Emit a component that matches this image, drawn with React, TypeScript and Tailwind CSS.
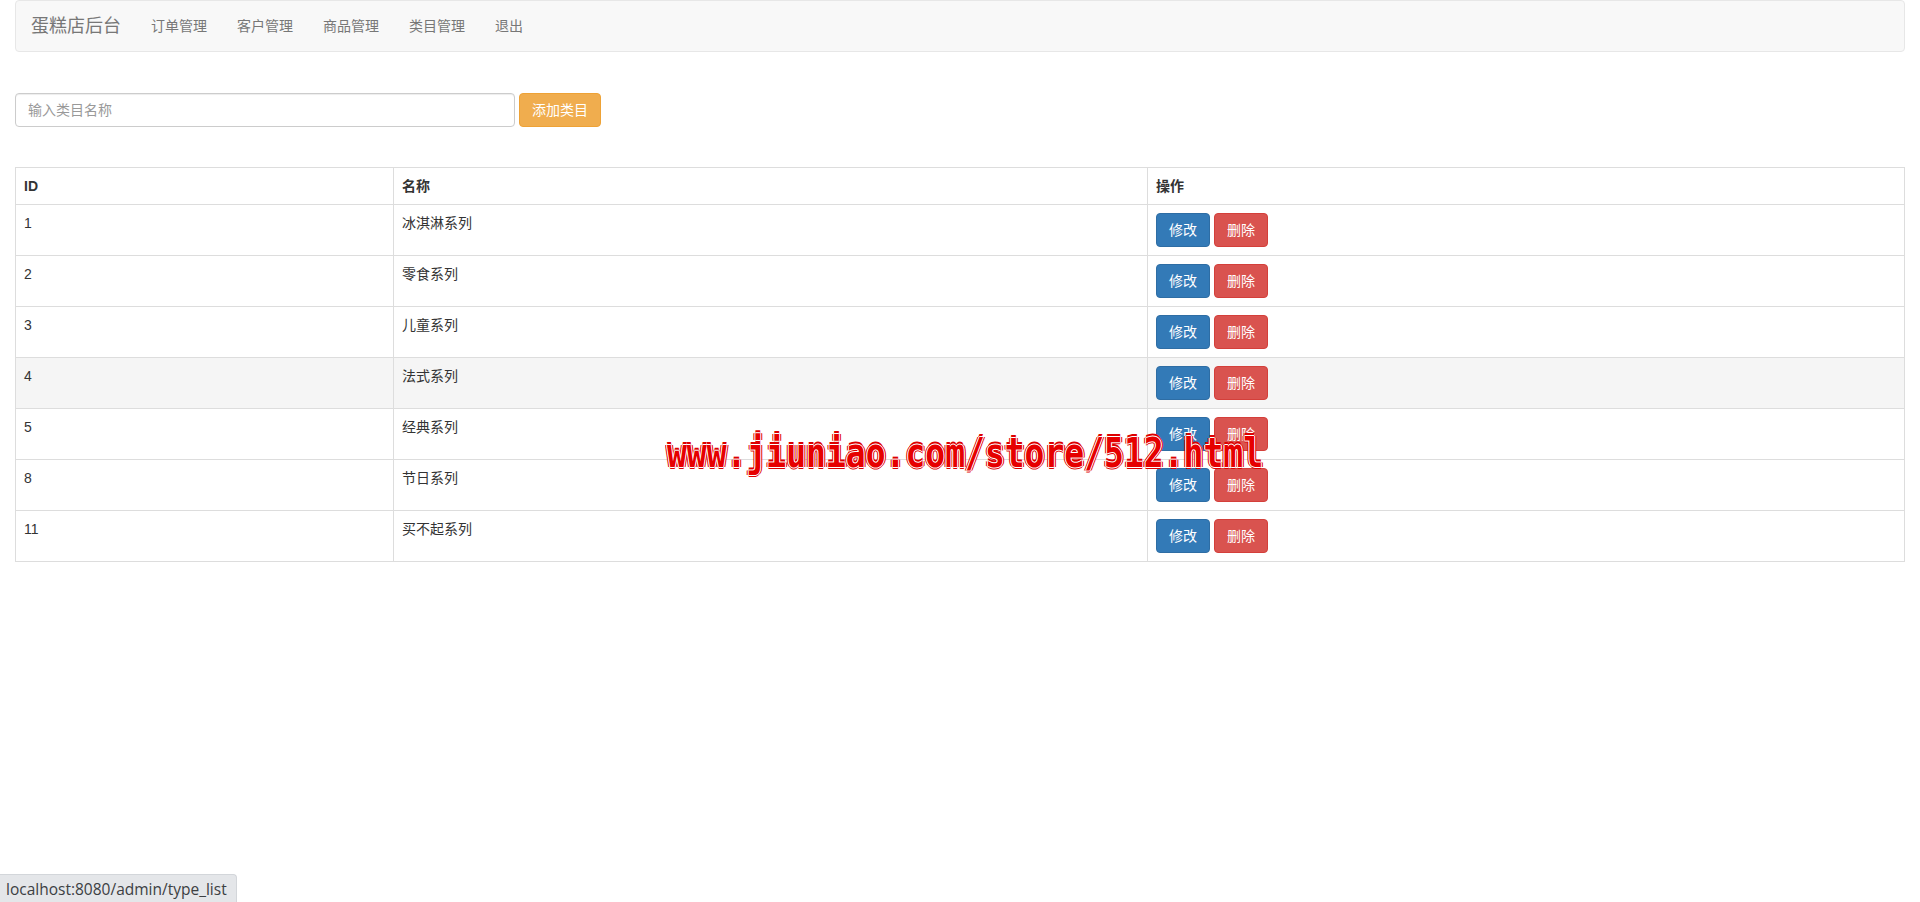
import React from "react";

interface Category {
    id: number;
    name: string;
}

const categories: Category[] = [
    { id: 1, name: "冰淇淋系列" },
    { id: 2, name: "零食系列" },
    { id: 3, name: "儿童系列" },
    { id: 4, name: "法式系列" },
    { id: 5, name: "经典系列" },
    { id: 8, name: "节日系列" },
    { id: 11, name: "买不起系列" },
];

const navLinks = ["订单管理", "客户管理", "商品管理", "类目管理", "退出"];

const App = () => {
    return (
        <div className="relative min-h-[902px] bg-white font-['Liberation_Sans','Noto_Sans_CJK_SC',sans-serif] text-[14px] leading-[20px] text-[#333]">
            <div className="px-[15px]">
                {/* navbar */}
                <nav className="flex h-[52px] items-center rounded border border-[#e7e7e7] bg-[#f8f8f8]">
                    <a className="px-[15px] text-[18px] leading-[20px] text-[#777]">蛋糕店后台</a>
                    <ul className="flex">
                        {navLinks.map((link) => (
                            <li key={link}>
                                <a className="block px-[15px] py-[15px] text-[#777]">{link}</a>
                            </li>
                        ))}
                    </ul>
                </nav>

                {/* add form */}
                <div className="mt-[41px] flex gap-1">
                    <input
                        type="text"
                        placeholder="输入类目名称"
                        className="h-[34px] w-[500px] rounded border border-[#ccc] px-3 text-[14px] text-[#555] shadow-[inset_0_1px_1px_rgba(0,0,0,0.075)] outline-none placeholder:text-[#999]"
                    />
                    <button className="h-[34px] rounded border border-[#eea236] bg-[#f0ad4e] px-3 text-[14px] text-white">
                        添加类目
                    </button>
                </div>

                {/* table */}
                <table className="mt-[40px] w-full border border-[#ddd]">
                    <thead>
                        <tr>
                            <th className="w-[378px] border border-[#ddd] p-2 text-left font-bold">ID</th>
                            <th className="w-[754px] border border-[#ddd] p-2 text-left font-bold">名称</th>
                            <th className="border border-[#ddd] p-2 text-left font-bold">操作</th>
                        </tr>
                    </thead>
                    <tbody>
                        {categories.map((c) => (
                            <tr key={c.id} className={c.id === 4 ? "bg-[#f5f5f5]" : ""}>
                                <td className="border border-[#ddd] p-2 align-top">{c.id}</td>
                                <td className="border border-[#ddd] p-2 align-top">{c.name}</td>
                                <td className="border border-[#ddd] p-2 align-top">
                                    <div className="flex gap-1">
                                        <button className="h-[34px] rounded border border-[#2e6da4] bg-[#337ab7] px-3 text-white">修改</button>
                                        <button className="h-[34px] rounded border border-[#d43f3a] bg-[#d9534f] px-3 text-white">删除</button>
                                    </div>
                                </td>
                            </tr>
                        ))}
                    </tbody>
                </table>
            </div>

            {/* watermark over the table */}
            <div className="pointer-events-none absolute left-[667px] top-[428px] origin-top scale-y-[1.25] font-['DejaVu_Sans_Mono',monospace] text-[33px] font-bold leading-[40px] text-[#e60000] [text-shadow:1px_0_0_#fff,-1px_0_0_#fff,0_1px_0_#fff,0_-1px_0_#fff,2px_0_0_#d00,-2px_0_0_#d00,0_2px_0_#d00,0_-2px_0_#d00]">
                www.jiuniao.com/store/512.html
            </div>

            {/* browser status bubble */}
            <div className="fixed bottom-0 left-0 flex h-[28px] w-[237px] items-center rounded-tr border-r border-t border-[#d3d6da] bg-[#e4e6e9] pl-[6px] font-['Open_Sans',sans-serif] text-[15.5px] text-[#3c4043]">
                localhost:8080/admin/type_list
            </div>
        </div>
    );
};

export default App;
